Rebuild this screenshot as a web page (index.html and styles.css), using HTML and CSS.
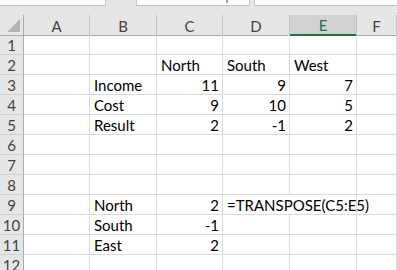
FILE: index.html
```html
<!DOCTYPE html>
<html>
	<head>
		<meta charset="utf-8"/>
		<title>Sheet1</title>
		<link rel="stylesheet" href="styles.css">
	</head>
	<body>
		<div class="topbar">
			<div class="namebox"></div>
			<div class="fxbox"><span class="tick"></span></div>
			<div class="formula"></div>
		</div>
		<div class="sheet">
			<div class="row head">
				<div class="corner"><span class="tri"></span></div>
				<div class="col">A</div>
				<div class="col">B</div>
				<div class="col">C</div>
				<div class="col">D</div>
				<div class="col sel">E</div>
				<div class="col">F</div>
			</div>
			<div class="row">
				<div class="num">1</div>
				<div class="cell"></div><div class="cell"></div><div class="cell"></div><div class="cell"></div><div class="cell"></div><div class="cell"></div>
			</div>
			<div class="row">
				<div class="num">2</div>
				<div class="cell"></div><div class="cell"></div>
				<div class="cell">North</div><div class="cell">South</div><div class="cell">West</div>
				<div class="cell"></div>
			</div>
			<div class="row">
				<div class="num">3</div>
				<div class="cell"></div><div class="cell">Income</div>
				<div class="cell n">11</div><div class="cell n">9</div><div class="cell n">7</div>
				<div class="cell"></div>
			</div>
			<div class="row">
				<div class="num">4</div>
				<div class="cell"></div><div class="cell">Cost</div>
				<div class="cell n">9</div><div class="cell n">10</div><div class="cell n">5</div>
				<div class="cell"></div>
			</div>
			<div class="row">
				<div class="num">5</div>
				<div class="cell"></div><div class="cell">Result</div>
				<div class="cell n">2</div><div class="cell n">-1</div><div class="cell n">2</div>
				<div class="cell"></div>
			</div>
			<div class="row">
				<div class="num">6</div>
				<div class="cell"></div><div class="cell"></div><div class="cell"></div><div class="cell"></div><div class="cell"></div><div class="cell"></div>
			</div>
			<div class="row">
				<div class="num">7</div>
				<div class="cell"></div><div class="cell"></div><div class="cell"></div><div class="cell"></div><div class="cell"></div><div class="cell"></div>
			</div>
			<div class="row">
				<div class="num">8</div>
				<div class="cell"></div><div class="cell"></div><div class="cell"></div><div class="cell"></div><div class="cell"></div><div class="cell"></div>
			</div>
			<div class="row">
				<div class="num">9</div>
				<div class="cell"></div><div class="cell">North</div>
				<div class="cell n">2</div>
				<div class="cell wide">=TRANSPOSE(C5:E5)</div>
				<div class="cell"></div>
			</div>
			<div class="row">
				<div class="num">10</div>
				<div class="cell"></div><div class="cell">South</div>
				<div class="cell n">-1</div>
				<div class="cell"></div><div class="cell"></div><div class="cell"></div>
			</div>
			<div class="row">
				<div class="num">11</div>
				<div class="cell"></div><div class="cell">East</div>
				<div class="cell n">2</div>
				<div class="cell"></div><div class="cell"></div><div class="cell"></div>
			</div>
			<div class="row">
				<div class="num">12</div>
				<div class="cell"></div><div class="cell"></div><div class="cell"></div><div class="cell"></div><div class="cell"></div><div class="cell"></div>
			</div>
		</div>
	</body>
</html>
```

FILE: styles.css
```css
body {
	margin: 0;
	width: 397px;
	height: 270px;
	overflow: hidden;
	background: #fff;
	font-family: 'Lato', 'Liberation Sans', sans-serif;
	font-size: 15px;
	color: #000;
}
.topbar {
	display: flex;
	height: 15px;
	background: #e6e6e6;
}
.namebox, .fxbox, .formula {
	height: 5px;
	background: #fff;
	border: 1px solid #c6c6c6;
	border-top: none;
}
.namebox {
	width: 105px;
	border-left: none;
}
.fxbox {
	width: 112px;
	margin-left: 30px;
	position: relative;
}
.tick {
	position: absolute;
	left: 89px;
	top: 0;
	width: 2px;
	height: 3px;
	background: #a0a0a0;
}
.formula {
	flex: 1;
	margin-left: 4px;
	border-right: none;
}
.row {
	display: grid;
	grid-template-columns: 24px 66px 67px 66px 67px 67px 1fr;
	height: 20px;
}
.head .col, .corner, .num {
	background: #e6e6e6;
	color: #444;
	box-sizing: border-box;
	display: flex;
	align-items: center;
	justify-content: center;
}
.head .col {
	border-right: 1px solid #c4c4c4;
	border-bottom: 1px solid #ababab;
	padding-top: 1px;
}
.head .sel {
	background: #d2d2d2;
	color: #217346;
	border-bottom: 2px solid #217346;
}
.corner {
	border-right: 1px solid #ababab;
	border-bottom: 1px solid #ababab;
	position: relative;
}
.tri {
	position: absolute;
	right: 3px;
	bottom: 3px;
	width: 0;
	height: 0;
	border-left: 13px solid transparent;
	border-bottom: 13px solid #b4b4b4;
}
.num {
	border-right: 1px solid #ababab;
	border-bottom: 1px solid #d0d0d0;
	padding-top: 1px;
}
.cell {
	box-sizing: border-box;
	border-right: 1px solid #dadada;
	border-bottom: 1px solid #dadada;
	padding: 0 3px 0 4px;
	line-height: 18px;
	display: flex;
	align-items: flex-end;
	white-space: nowrap;
}
.n {
	justify-content: flex-end;
}
.wide {
	grid-column: span 2;
}
```
